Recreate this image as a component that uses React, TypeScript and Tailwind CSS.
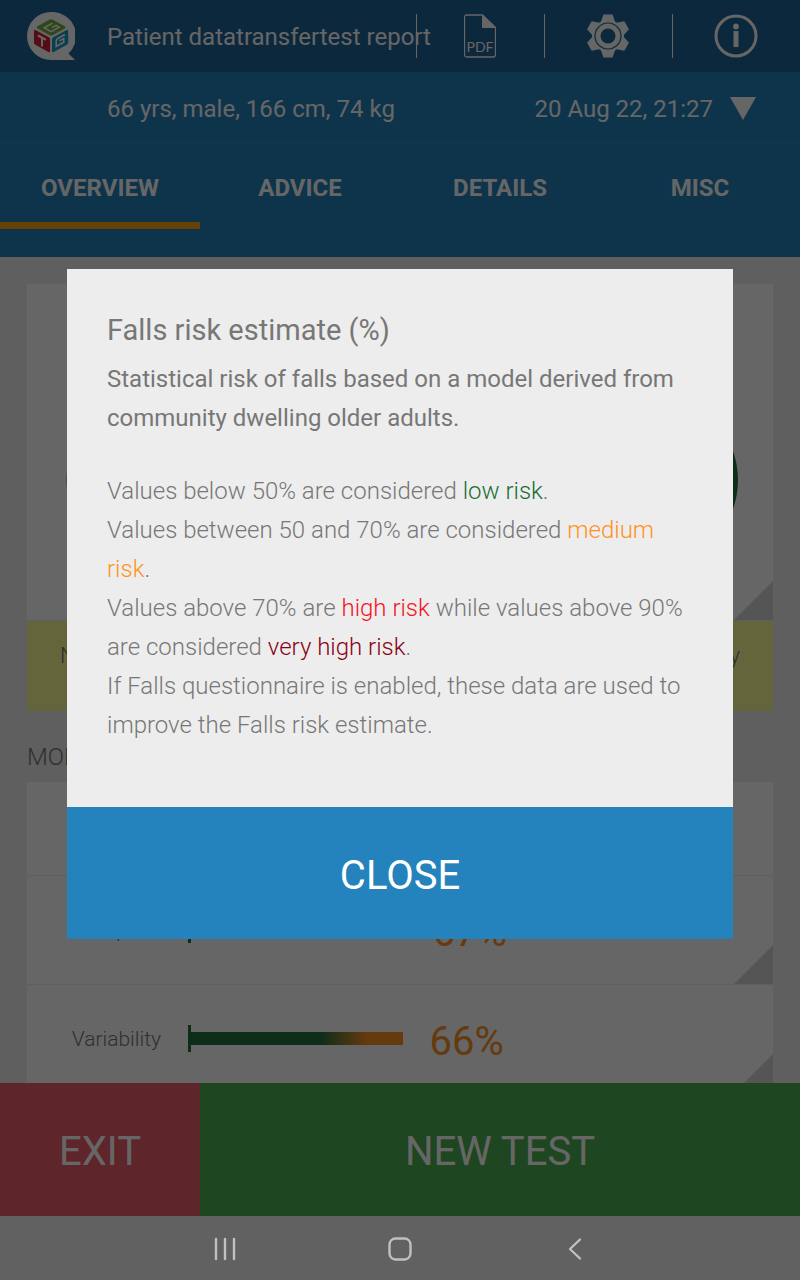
import React, { useState } from "react";

const action = "flex h-11 w-32 items-center justify-center border-l border-white pr-px";

function Logo() {
  return (
    <svg viewBox="0 0 48 48" className="size-12 shrink-0" aria-label="QTUG">
      <path d="M24 0a24 24 0 1 0 0 48h24l-6.500-6.500A24 24 0 0 0 24 0z" fill="#fff" />
      <path d="M10.500 14.200 22.300 7.700q1.800-.9 3.600 0L37.800 14.200q1.500 1.100 0 2.200l-11.900 6.700q-1.800.9-3.600 0L10.500 16.400q-1.500-1.100 0-2.200z" fill="#76b043" />
      <path d="m25.500 11.200-8.300 4.600 6 3.400q1 .5 2 0l7-4-3.200-1.800-4.100 2.300" fill="none" stroke="#fff" strokeWidth="1.500" />
      <path d="M7 19.600q-.1-2.500 1.900-1.400l12.900 7q1.300.7 1.300 2.200v11.600q0 1.800-1.700.9L8.400 32.800Q7 32 7 30.600z" fill="#d6203b" />
      <path d="m11 23.500 8 4.300M15 25.800v8.700" stroke="#fff" strokeWidth="2" fill="none" />
      <path d="M25 27.400q0-1.500 1.300-2.200l12.900-7q2-1.100 2 1.400v11q0 1.400-1.400 2.200l-13.100 7.100q-1.700.9-1.700-.9z" fill="#1b9dc4" />
      <path d="m38 22.500-7.200 4q-1.600.9-1.600 2.600v5.300l7.500-4.100v-3.700l-4.200 2.300" fill="none" stroke="#fff" strokeWidth="1.600" />
    </svg>
  );
}

function PdfIcon() {
  return (
    <svg viewBox="0 0 32 44" className="h-11 w-8">
      <path d="M3 1h15.500L31.500 13.500v27q0 2.500-2.500 2.500H3q-2.500 0-2.500-2.500v-37Q.5 1 3 1z" fill="none" stroke="#fff" strokeWidth="1.300" />
      <path d="M18 1v13h14z" fill="#fff" />
      <text x="16" y="37.500" textAnchor="middle" fontFamily="Lato, sans-serif" fontSize="14" fill="#fff">PDF</text>
    </svg>
  );
}

function GearIcon() {
  return (
    <svg viewBox="0 0 42 44" className="h-11 w-[42px]">
      <g fill="#fff" transform="translate(21 22)">
        {[0, 60, 120, 180, 240, 300].map((angle) => (
          <path key={angle} d="M-7.500-13-4.600-21.500h9.200L7.500-13z" transform={`rotate(${angle})`} />
        ))}
        <circle r="16" />
      </g>
      <circle cx="21" cy="22" r="13" fill="none" stroke="#1e6498" strokeWidth="1.200" />
      <circle cx="21" cy="22" r="7.500" fill="#1e6498" />
    </svg>
  );
}

function InfoIcon() {
  return (
    <svg viewBox="0 0 44 44" className="size-11">
      <circle cx="22" cy="22" r="20" fill="none" stroke="#fff" strokeWidth="3" />
      <circle cx="22" cy="12.500" r="2.900" fill="#fff" />
      <path d="M19.500 17h5v16h-5z" fill="#fff" />
    </svg>
  );
}

function Corner() {
  return (
    <svg viewBox="0 0 40 40" className="absolute right-0 bottom-0 size-10">
      <path d="M40 1v39H1z" fill="#d5d5d5" />
    </svg>
  );
}

function Metric({ label, value }: { label: string; value: number }) {
  return (
    <div className="relative flex h-[109px] shrink-0 items-center border-t border-[#eee] pb-[2px]">
      <span className="w-[161px] pt-1 pr-[27px] text-right text-[21px] font-light">{label}</span>
      <div className="h-[27px] w-[3px] bg-[#25703f]" />
      <div className="flex flex-1 items-center gap-[26px]">
        <div
          className="h-[13px] bg-[linear-gradient(90deg,#25703f_61%,#fa9123_83%)]"
          style={{ width: `${value * 0.553}%` }}
        />
        <span className="pt-2 text-[40px] leading-10 text-[#fa9123]">{value}%</span>
      </div>
      <Corner />
    </div>
  );
}

export default function App() {
  const [tab, setTab] = useState("OVERVIEW");
  const [open, setOpen] = useState(true);

  return (
    <div className="flex h-screen flex-col overflow-hidden font-['Roboto',sans-serif] text-[24px]">
      <div className="relative flex min-h-0 flex-1 flex-col bg-[#eee] text-[#777]">
        <header className="bg-[#2482bc] text-white">
          <div className="flex h-[72px] items-center bg-[#1e6498]">
            <div className="flex min-w-0 flex-1 items-center gap-8 pl-[27px]">
              <Logo />
              <h1 className="pt-[2px] whitespace-nowrap">Patient datatransfertest report</h1>
            </div>
            <button className={action} aria-label="PDF report"><PdfIcon /></button>
            <button className={action} aria-label="Settings"><GearIcon /></button>
            <button className={action} aria-label="Information"><InfoIcon /></button>
          </div>
          <div className="flex h-[72px] items-center justify-between border-b border-[#2092b8] pt-[2px] pr-11 pl-[107px]">
            <span>66 yrs, male, 166 cm, 74 kg</span>
            <button className="flex items-center gap-[17px]">
              20 Aug 22, 21:27
              <svg viewBox="0 0 26 23" className="h-[23px] w-[26px]"><path d="M0 0h26L13 23z" fill="#fff" /></svg>
            </button>
          </div>
          <nav className="flex h-[113px]">
            {["OVERVIEW", "ADVICE", "DETAILS", "MISC"].map((name) => (
              <button
                key={name}
                onClick={() => setTab(name)}
                className={`h-[85px] flex-1 border-b-[7px] pt-[10px] font-bold ${tab === name ? "border-[#ffa50a]" : "border-transparent"}`}
              >
                {name}
              </button>
            ))}
          </nav>
        </header>

        <main className="flex min-h-0 flex-1 flex-col overflow-hidden px-[27px] pt-[27px]">
          <section className="relative flex h-[336px] shrink-0 items-center justify-between bg-white pt-14 pr-[35px] pl-[39px]">
            <svg viewBox="0 0 174 174" className="size-[174px]"><circle cx="87" cy="87" r="85" fill="none" stroke="#888" strokeWidth="3" /></svg>
            <svg viewBox="0 0 174 174" className="size-[174px]"><circle cx="87" cy="87" r="87" fill="#25703f" /></svg>
            <Corner />
          </section>
          <section className="flex h-[91px] shrink-0 justify-between border-t border-[#eee] bg-[#fafc91] px-[33px] pt-[22px] text-[22px] leading-[26px] font-light">
            <span>Normal</span>
            <span>mobility</span>
          </section>
          <h2 className="shrink-0 pt-[27px] pb-[5px] leading-[39px] font-light">MOBILITY</h2>
          <section className="flex flex-col bg-white">
            <div className="h-[93px] shrink-0" />
            <Metric label="Speed" value={67} />
            <Metric label="Variability" value={66} />
          </section>
        </main>

        <footer className="flex h-[133px] shrink-0 text-[40px] text-white">
          <button className="w-1/4 bg-[#eb5c6b] pt-[5px]">EXIT</button>
          <button className="flex-1 bg-[#4caf50] pt-[5px]">NEW TEST</button>
        </footer>

        {open && (
          <div className="absolute inset-0 z-10 flex items-center bg-black/60 px-[67px] pb-2">
            <div role="dialog" aria-labelledby="dialog-title" className="w-full bg-[#ededed] text-[#777]">
              <div className="px-10 pt-[41px] pb-[62px] leading-[39px]">
                <h2 id="dialog-title" className="text-[29px] leading-[41px]">Falls risk estimate (%)</h2>
                <p className="mt-[9px]">
                  Statistical risk of falls based on a model derived from community dwelling older adults.
                </p>
                <div className="mt-[34px] font-light">
                  <p>Values below 50% are considered <span className="text-[#1b6d37]">low risk</span>.</p>
                  <p>Values between 50 and 70% are considered <span className="text-[#ff931e]">medium risk</span>.</p>
                  <p>
                    Values above 70% are <span className="text-[#f5141e]">high risk</span> while values above 90%
                    are considered <span className="text-[#8b0016]">very high risk</span>.
                  </p>
                  <p>If Falls questionnaire is enabled, these data are used to improve the Falls risk estimate.</p>
                </div>
              </div>
              <button onClick={() => setOpen(false)} className="h-[132px] w-full bg-[#2482bc] pt-[6px] text-[40px] text-white">
                CLOSE
              </button>
            </div>
          </div>
        )}
      </div>

      <nav className="flex h-16 shrink-0 items-center justify-center gap-[147px] bg-[#616161] pt-[2px]">
        <button aria-label="Recent apps">
          <svg viewBox="0 0 28 28" className="size-7"><path d="M5 4v20M14 4v20M23 4v20" stroke="#c0c0c0" strokeWidth="2.400" strokeLinecap="round" /></svg>
        </button>
        <button aria-label="Home">
          <svg viewBox="0 0 28 28" className="size-7"><rect x="3.500" y="3.500" width="21" height="21" rx="6" fill="none" stroke="#c0c0c0" strokeWidth="2.400" /></svg>
        </button>
        <button aria-label="Back">
          <svg viewBox="0 0 28 28" className="size-7"><path d="M19 4.500 9 14l10 9.500" fill="none" stroke="#c0c0c0" strokeWidth="2.400" strokeLinecap="round" strokeLinejoin="round" /></svg>
        </button>
      </nav>
    </div>
  );
}
